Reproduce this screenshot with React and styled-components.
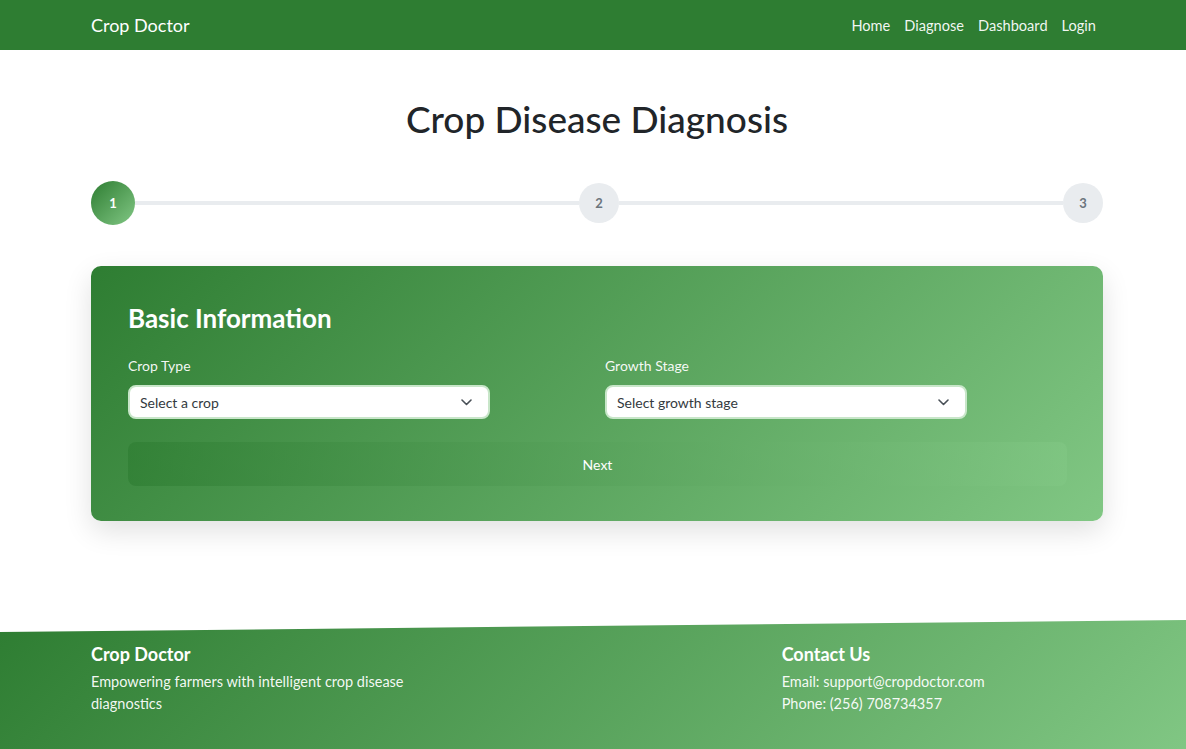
import React from "react";
import styled, { createGlobalStyle } from "styled-components";

let GlobalStyle = createGlobalStyle`
  body {
    margin: 0;
    font-family: "Lato", "Open Sans", sans-serif;
    color: #212529;
    background: #fff;
    overflow: hidden;
  }
  * { box-sizing: border-box; }
`;

let Page = styled.div`
  min-height: 749px;
  display: flex;
  flex-direction: column;
`;

let Container = styled.div`
  padding: 0 83px 0 91px;
`;

let NavBar = styled.nav`
  height: 50px;
  background: #2e7d32;
`;

let NavInner = styled(Container)`
  height: 100%;
  display: flex;
  align-items: center;
  justify-content: space-between;
`;

let Brand = styled.a`
  color: #fff;
  font-size: 18px;
  text-decoration: none;
`;

let NavLinks = styled.div`
  display: flex;
  gap: 14px;
  padding-right: 7px;
`;

let NavLink = styled.a`
  color: rgba(255, 255, 255, 0.95);
  font-size: 14.6px;
  text-decoration: none;
`;

let Main = styled(Container)`
  padding-top: 46px;
  padding-bottom: 99px;
`;

let Title = styled.h1`
  margin: 0 0 39px;
  text-align: center;
  font-size: 37px;
  font-weight: 500;
  line-height: 46px;
  color: #212529;
`;

let Stepper = styled.div`
  display: flex;
  align-items: center;
  height: 44px;
  margin-bottom: 41px;
`;

let Step = styled.div`
  flex: none;
  width: ${p => (p.active ? "44px" : "40px")};
  height: ${p => (p.active ? "44px" : "40px")};
  border-radius: 50%;
  display: flex;
  align-items: center;
  justify-content: center;
  font-size: 13px;
  font-weight: 700;
  color: ${p => (p.active ? "#fff" : "#6c757d")};
  background: ${p =>
    p.active ? "linear-gradient(135deg, #2e7d32, #81c784)" : "#e9ecef"};
`;

let StepLine = styled.div`
  flex: 1;
  height: 4px;
  background: #e9ecef;
`;

let Card = styled.section`
  border-radius: 10px;
  padding: 37px 36px 35px 37px;
  background: linear-gradient(135deg, #2e7d32 0%, #81c784 100%);
  box-shadow: 0 10px 28px rgba(0, 0, 0, 0.12);
  color: #fff;
`;

let CardTitle = styled.h2`
  margin: 0 0 21px;
  font-size: 26px;
  font-weight: 700;
  line-height: 31px;
`;

let FieldRow = styled.div`
  display: grid;
  grid-template-columns: 1fr 1fr;
  gap: 0 15px;
  margin-bottom: 23px;
`;

let Field = styled.div`
  display: flex;
  flex-direction: column;
`;

let Label = styled.label`
  font-size: 14px;
  line-height: 21px;
  margin-bottom: 9px;
  color: rgba(255, 255, 255, 0.95);
`;

let Select = styled.div`
  width: 362px;
  height: 34px;
  display: flex;
  align-items: center;
  justify-content: space-between;
  padding: 0 16px 0 10px;
  background: #fff;
  border: 2px solid #c8e6c9;
  border-radius: 8px;
  font-size: 14px;
  color: #343a40;
`;

let NextButton = styled.button`
  display: block;
  width: 100%;
  height: 44px;
  border: none;
  border-radius: 8px;
  background: linear-gradient(90deg, rgba(46, 125, 50, 0.65) 0%, rgba(129, 199, 132, 0.65) 100%);
  color: #fff;
  font-family: inherit;
  font-size: 14px;
`;

let Footer = styled.footer`
  flex: 1;
  min-height: 140px;
  padding-top: 23px;
  background: linear-gradient(135deg, #2e7d32 0%, #81c784 100%);
  clip-path: polygon(0 12px, 100% 0, 100% 100%, 0 100%);
  color: #fff;
`;

let FooterGrid = styled(Container)`
  display: grid;
  grid-template-columns: repeat(3, 1fr);
  column-gap: 24px;
`;

let FooterHeading = styled.h5`
  margin: 0 0 6px;
  font-size: 18px;
  font-weight: 700;
  line-height: 22px;
`;

let FooterText = styled.p`
  margin: 0;
  font-size: 14.5px;
  line-height: 22px;
  color: rgba(255, 255, 255, 0.95);
`;

function Chevron() {
  return (
    <svg width="11" height="7" viewBox="0 0 11 7" fill="none">
      <path d="M1 1l4.5 4.5L10 1" stroke="#495057" strokeWidth="1.6" strokeLinecap="round" strokeLinejoin="round" />
    </svg>
  );
}

export default function App() {
  return (
    <Page>
      <GlobalStyle />
      <NavBar>
        <NavInner>
          <Brand href="#">Crop Doctor</Brand>
          <NavLinks>
            <NavLink href="#">Home</NavLink>
            <NavLink href="#">Diagnose</NavLink>
            <NavLink href="#">Dashboard</NavLink>
            <NavLink href="#">Login</NavLink>
          </NavLinks>
        </NavInner>
      </NavBar>

      <Main>
        <Title>Crop Disease Diagnosis</Title>
        <Stepper>
          <Step active>1</Step>
          <StepLine />
          <Step>2</Step>
          <StepLine />
          <Step>3</Step>
        </Stepper>

        <Card>
          <CardTitle>Basic Information</CardTitle>
          <FieldRow>
            <Field>
              <Label>Crop Type</Label>
              <Select>
                Select a crop
                <Chevron />
              </Select>
            </Field>
            <Field>
              <Label>Growth Stage</Label>
              <Select>
                Select growth stage
                <Chevron />
              </Select>
            </Field>
          </FieldRow>
          <NextButton>Next</NextButton>
        </Card>
      </Main>

      <Footer>
        <FooterGrid>
          <div>
            <FooterHeading>Crop Doctor</FooterHeading>
            <FooterText>Empowering farmers with intelligent crop disease diagnostics</FooterText>
          </div>
          <div />
          <div>
            <FooterHeading>Contact Us</FooterHeading>
            <FooterText>Email: support@cropdoctor.com</FooterText>
            <FooterText>Phone: (256) 708734357</FooterText>
          </div>
        </FooterGrid>
      </Footer>
    </Page>
  );
}
